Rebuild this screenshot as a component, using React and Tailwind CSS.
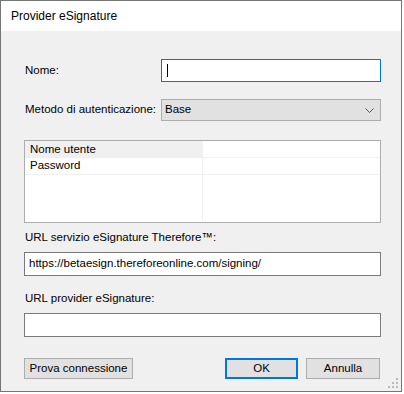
import React from "react";

const font = { fontFamily: '"Liberation Sans", Arial, sans-serif' };

const Grip = () => (
  <svg className="absolute right-[2px] bottom-[2px]" width="11" height="11" viewBox="0 0 11 11">
    {[
      [8, 0],
      [8, 4],
      [4, 4],
      [8, 8],
      [4, 8],
      [0, 8],
    ].map(([x, y], i) => (
      <rect key={i} x={x} y={y} width="2" height="2" fill="#b8b8b8" />
    ))}
  </svg>
);

const Button = ({ children, primary, className = "" }) => (
  <button
    className={`h-[21px] bg-[#e1e1e1] text-[11.5px] text-black leading-none whitespace-nowrap ${
      primary ? "border-2 border-[#0078d7]" : "border border-[#adadad]"
    } ${className}`}
  >
    {children}
  </button>
);

export default function App() {
  return (
    <div className="w-[404px] h-[394px] bg-white" style={font}>
      <div className="relative w-[402px] h-[392px] border border-[#767676] flex flex-col">
        {/* Title bar */}
        <div className="h-[30px] bg-white flex items-center pl-[10px] text-[12px] text-black">
          Provider eSignature
        </div>

        {/* Body */}
        <div className="flex-1 bg-[#f0f0f0] pl-[23px] pr-[20px] pt-[28px] text-[11.5px] text-black">
          <div className="flex items-center">
            <span className="w-[137px] pl-[1px] whitespace-nowrap">Nome:</span>
            <div className="w-[220px] h-[23px] bg-white border border-[#0078d7] flex items-center pl-[5px]">
              <span className="w-px h-[13px] bg-black" />
            </div>
          </div>

          <div className="flex items-center mt-[17px]">
            <span className="w-[137px] pl-[1px] whitespace-nowrap">Metodo di autenticazione:</span>
            <div className="w-[220px] h-[22px] bg-[#e1e1e1] border border-[#adadad] flex items-center justify-between pl-[3px] pr-[5px]">
              <span>Base</span>
              <svg width="9" height="5" viewBox="0 0 9 5" className="mr-[1px]">
                <path d="M0.5 0.5 L4.5 4.5 L8.5 0.5" fill="none" stroke="#555" strokeWidth="1" />
              </svg>
            </div>
          </div>

          {/* Grid */}
          <div className="mt-[19px] h-[83px] bg-white border border-[#adadad] flex">
            <div className="w-[178px] border-r border-[#f0f0f0] flex flex-col">
              <div className="h-[17px] bg-[#f0f0f0] pl-[5px] flex items-center">Nome utente</div>
              <div className="h-[17px] border-b border-[#f0f0f0] pl-[5px] flex items-center">Password</div>
            </div>
            <div className="flex-1 flex flex-col">
              <div className="h-[17px] border-b border-[#f0f0f0]" />
              <div className="h-[17px] border-b border-[#f0f0f0]" />
            </div>
          </div>

          <div className="mt-[6px] h-[16px] pl-[1px] leading-[16px] whitespace-nowrap">URL servizio eSignature Therefore™:</div>
          <div className="mt-[7px] h-[24px] bg-white border border-[#7a7a7a] flex items-center pl-[4px] whitespace-nowrap">
            https://betaesign.thereforeonline.com/signing/
          </div>

          <div className="mt-[14px] h-[16px] pl-[1px] leading-[16px] whitespace-nowrap">URL provider eSignature:</div>
          <div className="mt-[7px] h-[24px] bg-white border border-[#7a7a7a]" />

          <div className="mt-[21px] flex items-center">
            <Button className="w-[109px]">Prova connessione</Button>
            <div className="flex-1" />
            <Button primary className="w-[73px]">OK</Button>
            <Button className="w-[74px] ml-[8px]">Annulla</Button>
            <div className="w-[1px]" />
          </div>
        </div>
        <Grip />
      </div>
    </div>
  );
}
